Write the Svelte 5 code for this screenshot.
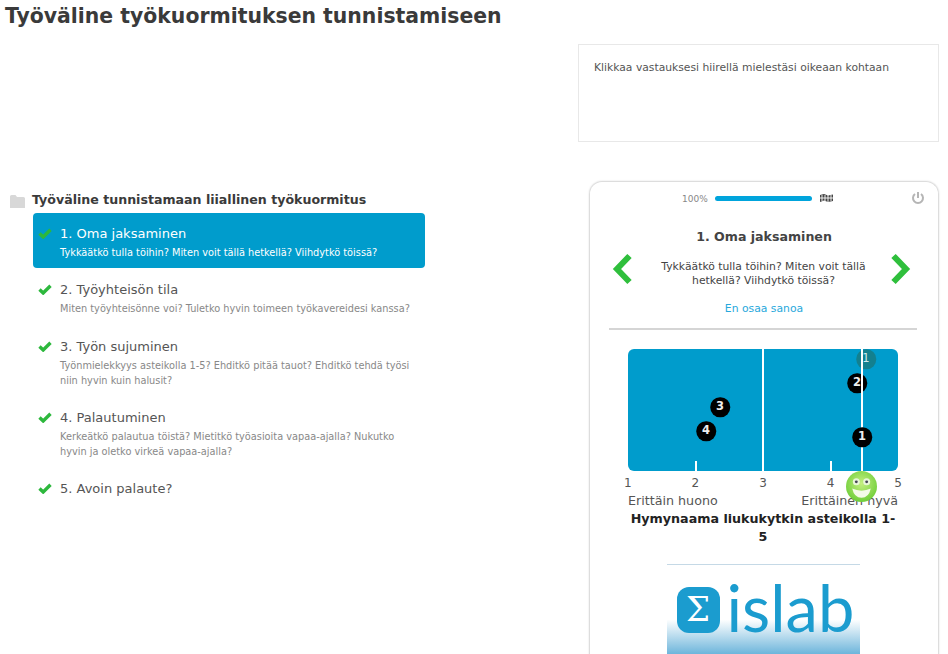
<script>
  const items = [
    { n: '1. Oma jaksaminen', d: 'Tykkäätkö tulla töihin? Miten voit tällä hetkellä? Viihdytkö töissä?', active: true },
    { n: '2. Työyhteisön tila', d: 'Miten työyhteisönne voi? Tuletko hyvin toimeen työkavereidesi kanssa?' },
    { n: '3. Työn sujuminen', d: 'Työnmielekkyys asteikolla 1-5? Ehditkö pitää tauot? Ehditkö tehdä työsi niin hyvin kuin halusit?' },
    { n: '4. Palautuminen', d: 'Kerkeätkö palautua töistä? Mietitkö työasioita vapaa-ajalla? Nukutko hyvin ja oletko virkeä vapaa-ajalla?' },
    { n: '5. Avoin palaute?', d: '' }
  ];
  const dots = [
    { t: '1', x: 238, y: 10, cls: 'ghost' },
    { t: '2', x: 229, y: 34 },
    { t: '3', x: 92, y: 58 },
    { t: '4', x: 78, y: 82 },
    { t: '1', x: 234, y: 88, cls: 'top' }
  ];
  const scale = [1, 2, 3, 4, 5];
</script>

<div class="page">
  <h1>Työväline työkuormituksen tunnistamiseen</h1>
  <div class="hint-row">
    <div class="hint">Klikkaa vastauksesi hiirellä mielestäsi oikeaan kohtaan</div>
  </div>
  <div class="main">
    <section class="left">
      <div class="tree-head">
        <svg class="folder" viewBox="0 0 15 13" width="15" height="13"><path d="M0 1.5 Q0 0 1.5 0 H5.5 L7 2 H13.5 Q15 2 15 3.5 V13 H0 Z" fill="#d8d8d8"/></svg>
        <span>Työväline tunnistamaan liiallinen työkuormitus</span>
      </div>
      <ul>
        {#each items as it}
          <li class:active={it.active}>
            <svg class="check" viewBox="0 0 14 11" width="14" height="11"><path d="M1.5 5.5 L5.2 9 L12.5 1.8" fill="none" stroke="#2db83d" stroke-width="3.4"/></svg>
            <div class="name">{it.n}</div>
            {#if it.d}<div class="desc">{it.d}</div>{/if}
          </li>
        {/each}
      </ul>
    </section>
    <section class="phone">
      <div class="progress">
        <span class="pct">100%</span>
        <span class="bar"></span>
        <svg viewBox="0 0 15 9" width="15" height="9" class="flag">
          <path d="M1 1 L5 0 L9 1.5 L14 0.5 L14 7 L9 8 L5 6.5 L1 8 Z" fill="#444"/>
          <path d="M3 1 V7 M6 1 V7 M9 1 V8 M12 1 V7 M1 4 H14" stroke="#fff" stroke-width="0.9"/>
        </svg>
        <svg class="power" viewBox="0 0 14 14" width="14" height="14"><path d="M4 3 A5 5 0 1 0 10 3" fill="none" stroke="#b5b5b5" stroke-width="2"/><path d="M7 1 V7" stroke="#b5b5b5" stroke-width="2"/></svg>
      </div>
      <h2>1. Oma jaksaminen</h2>
      <div class="question">
        <svg viewBox="0 0 21 32" width="21" height="32"><path d="M17.5 3 L5 16 L17.5 29" fill="none" stroke="#2fbf3c" stroke-width="6"/></svg>
        <p>Tykkäätkö tulla töihin? Miten voit tällä hetkellä? Viihdytkö töissä?</p>
        <svg viewBox="0 0 21 32" width="21" height="32"><path d="M3.5 3 L16 16 L3.5 29" fill="none" stroke="#2fbf3c" stroke-width="6"/></svg>
      </div>
      <div class="skip">En osaa sanoa</div>
      <hr class="rule" />
      <div class="slider">
        <div class="track">
          <i class="mid"></i><i class="tick t2"></i><i class="tick t4"></i>
          {#each dots as d}
            <b class="dot {d.cls ?? ''}" style="left:{d.x}px;top:{d.y}px">{d.t}</b>
          {/each}
          <i class="pos"></i>
        </div>
        <div class="nums">{#each scale as s}<span>{s}</span>{/each}</div>
        <div class="ends"><span>Erittäin huono</span><span>Erittäinen hyvä</span></div>
        <svg class="smiley" viewBox="0 0 30 30" width="31" height="31">
          <defs><radialGradient id="sm" cx="50%" cy="40%" r="60%"><stop offset="0" stop-color="#c4ef80"/><stop offset="1" stop-color="#6fce3a"/></radialGradient></defs>
          <circle cx="15" cy="15" r="15" fill="url(#sm)"/>
          <circle cx="10" cy="10.5" r="3.4" fill="#e8f6d8"/><circle cx="20" cy="10.5" r="3.4" fill="#e8f6d8"/>
          <circle cx="10" cy="10.5" r="1.4" fill="#445"/><circle cx="20" cy="10.5" r="1.4" fill="#445"/>
          <path d="M6 17 Q15 21 24 17 Q22 26 15 26 Q8 26 6 17 Z" fill="#f4fbe9"/>
        </svg>
      </div>
      <div class="caption">Hymynaama liukukytkin asteikolla 1-5</div>
      <div class="logo">
        <span class="mark">Σ</span>
        <span class="word">islab</span>
      </div>
    </section>
  </div>
</div>

<style>
  :global(body) { margin: 0; background: #fff; overflow: hidden; }
  .page { width: 948px; height: 654px; overflow: hidden; font-family: "DejaVu Sans", Verdana, sans-serif; color: #444; }
  h1 { margin: 0; padding: 4px 0 0 5px; height: 44px; box-sizing: border-box; font-size: 20.4px; line-height: 24px; font-weight: 700; color: #3a3a3a; }
  .hint-row { display: flex; justify-content: flex-end; padding-right: 9px; }
  .hint { width: 361px; height: 98px; box-sizing: border-box; border: 1px solid #e8e8e8; padding: 15px 15px; font-size: 10.75px; line-height: 16px; color: #555; }
  .main { display: flex; margin-top: 39px; padding-right: 9px; }
  .left { width: 425px; padding-left: 10px; padding-top: 10px; box-sizing: border-box; flex: none; }
  .tree-head { display: flex; align-items: center; gap: 7px; height: 16px; font-size: 12.6px; font-weight: 700; color: #3a3a3a; white-space: nowrap; }
  .folder { margin-top: 5px; }
  ul { list-style: none; margin: 6px 0 0 23px; padding: 0; }
  li { position: relative; padding: 11px 8px 8px 27px; border-radius: 4px; margin-bottom: 1px; }
  li:nth-child(2) { margin-bottom: 2px; }
  li.active { background: #009ccc; color: #fff; }
  .check { position: absolute; left: 5px; top: 15px; }
  .name { font-size: 13px; line-height: 19px; color: #555; }
  .desc { font-size: 9.78px; line-height: 15px; color: #888; margin-top: 2px; }
  .active .name, .active .desc { color: #fff; }
  .phone { width: 350px; height: 520px; margin-left: auto; box-sizing: border-box; border: 1px solid #ddd; border-bottom: 0; border-radius: 13px 13px 0 0; box-shadow: 0 0 2px #ddd; flex: none; display: flex; flex-direction: column; align-items: center; }
  .progress { align-self: stretch; position: relative; display: flex; align-items: center; height: 15px; margin-top: 9px; padding-left: 92px; }
  .pct { font-size: 9px; color: #888; width: 33px; }
  .bar { width: 97px; height: 5px; border-radius: 3px; background: #00a4dc; margin-right: 7px; }
  .power { position: absolute; right: 13px; top: 0; }
  h2 { margin: 23px 0 0; font-size: 12.6px; line-height: 16px; font-weight: 700; color: #444; }
  .question { align-self: stretch; display: flex; align-items: center; justify-content: space-between; padding: 0 27px 0 22px; margin-top: 1px; height: 46px; }
  .question p { margin: 10px 0 0 4px; width: 224px; text-align: center; font-size: 10.8px; line-height: 14px; color: #444; }
  .skip { margin-top: 10px; font-size: 10.8px; line-height: 14px; color: #28a8dc; }
  .rule { align-self: stretch; margin: 12px 21px 0 19px; border: 0; height: 2px; background: #d5d5d5; }
  .slider { position: relative; width: 270px; margin: 19px 0 0 -2px; }
  .track { position: relative; height: 122px; background: #009ccc; border-radius: 6px; }
  .track i { position: absolute; background: #fff; }
  .mid { left: 134px; top: 0; bottom: 0; width: 2px; }
  .pos { left: 233px; top: 0; bottom: 0; width: 1.5px; }
  .tick { bottom: 0; height: 10px; width: 2px; }
  .t2 { left: 67px; }
  .t4 { left: 202px; }
  .dot { position: absolute; width: 19.5px; height: 19.5px; transform: translate(-50%, -50%); border-radius: 50%; background: #000; color: #eee; font-size: 11.5px; font-weight: 700; line-height: 19.5px; text-align: center; }
  .ghost { background: #13808f; color: #cfe9ee; font-weight: 400; }
  .top { z-index: 1; }
  .nums { display: flex; justify-content: space-between; margin: 5px -4px 0; font-size: 12px; line-height: 15px; color: #555; }
  .ends { display: flex; justify-content: space-between; font-size: 12.7px; line-height: 16px; color: #555; margin-top: 2px; }
  .smiley { position: absolute; left: 218px; top: 122px; }
  .caption { width: 270px; margin: 1px 0 0 -2px; text-align: center; font-size: 12.7px; line-height: 18px; font-weight: 700; color: #222; }
  .logo { width: 193px; margin: 18px 0 0 -2px; height: 100px; box-sizing: border-box; flex: none; border-top: 1px solid #c5d9e6; background: linear-gradient(#fff 55%, #6db5db 90%); display: flex; align-items: flex-start; gap: 7px; padding-left: 10px; color: #1b9ccf; }
  .mark { width: 43px; height: 46px; margin-top: 22px; border-radius: 12px; background: #1b9ccf; color: #fff; font-family: "DejaVu Serif", serif; font-size: 34px; line-height: 45px; text-align: center; flex: none; }
  .word { margin-top: 10px; font-family: Lato, "Open Sans", sans-serif; font-weight: 400; font-size: 65px; line-height: 64px; }
</style>
